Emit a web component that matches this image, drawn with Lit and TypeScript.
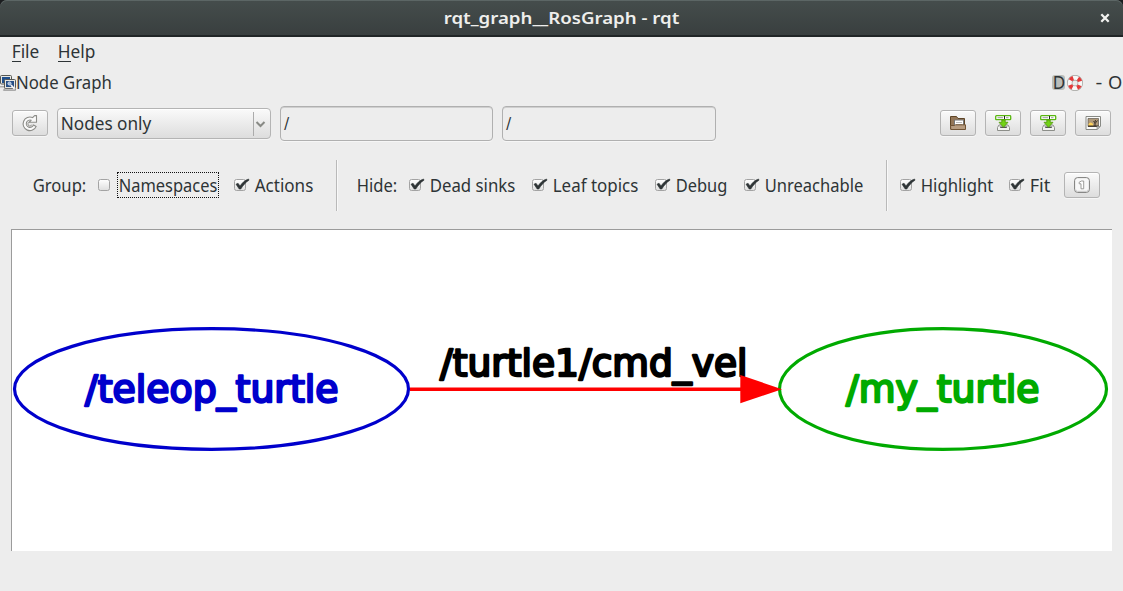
import { LitElement, html, css, svg, nothing } from "lit";
import { customElement, property } from "lit/decorators.js";

/** A line of interface text set to a fixed measure. */
@customElement("ui-label")
class UiLabel extends LitElement {
  @property() text = "";
  @property({ type: Number }) width = 50;
  @property({ type: Number }) inset = 0.3;
  @property({ type: Boolean }) mnemonic = false;
  @property({ type: Number }) underline = 9;
  @property({ type: Boolean, reflect: true }) strong = false;

  static styles = css`
    :host { display: block; flex: none; height: 20px; color: #2e3436; }
    svg { display: block; overflow: visible; }
    text { font-family: "Noto Sans", "Open Sans", sans-serif; font-size: 17.4px; fill: currentColor; white-space: pre; }
    :host([strong]) { color: #eeeeec; }
    :host([strong]) text { font-weight: 600; font-size: 16.8px; }
  `;

  render() {
    return html`<svg width=${this.width} height="20">
      <text x=${-this.inset} y="16" textLength=${this.width + this.inset + 0.3} lengthAdjust="spacingAndGlyphs">${this.text}</text>
      ${this.mnemonic ? svg`<rect x="0" y="19" width=${this.underline} height="1" fill="#2e3436"/>` : nothing}
    </svg>`;
  }
}

@customElement("check-item")
class CheckItem extends LitElement {
  @property() label = "";
  @property({ type: Number }) width = 50;
  @property({ type: Boolean }) checked = false;
  @property({ type: Boolean }) focused = false;

  static styles = css`
    :host { display: flex; align-items: center; flex: none; gap: 4px; }
    .box { display: block; overflow: visible; }
    .focus { outline: 1px dotted #111; outline-offset: 1px; height: 22px; padding-top: 2px; margin-bottom: 2px; box-sizing: border-box; }
  `;

  render() {
    return html`
      <svg class="box" width="17" height="16">
        <defs><linearGradient id="g" x2="0" y2="1"><stop stop-color="#fff"/><stop offset="1" stop-color="#dedede"/></linearGradient></defs>
        <rect x=".5" y="1.5" width="11" height="11" rx="2" fill="url(#g)" stroke="#a3a3a3"/>
        ${this.checked ? svg`<path d="M2 6.2 4 5.2 6 8 C8.5 4.5 11 2 14.6 1 L15 2.2 C11.5 4.4 9 7.5 6.8 11 H5.2Z" fill="#2e3436" stroke="#2e3436" stroke-width=".6"/>` : nothing}
      </svg>
      <div class=${this.focused ? "focus" : ""}><ui-label .text=${this.label} .width=${this.width}></ui-label></div>`;
  }
}

const icons = {
  refresh: svg`<path d="M10.6 2.6A6.8 6.8 0 1 0 14.2 11.4L11.5 9.9A3.7 3.7 0 1 1 9.2 5.2L7.4 7.2H14.5V.6H12.6Z" fill="#fafafa" stroke="#8c8c88" stroke-width="1.1" stroke-linejoin="round"/><path d="M9.8 9.6A2 2 0 1 1 8 7" fill="none" stroke="#8c8c88" stroke-width=".9"/>`,
  folder: svg`<path d="M.5 14V1.5H6.5L8 3.5H14.5V14Z" fill="#947657" stroke="#5e4526"/><path d="M4.5 5H13.5V11H4.5Z" fill="#fff" stroke="#777"/><path d="M6 7.5H12M6 9.5H12" stroke="#bbb"/><path d="M.5 10.5H4.5L5.5 9.8H15.5V14.5H.8Z" fill="#b79c80" stroke="#705334"/>`,
  save: svg`<path d="M2.5 12.5 4 10H13L14.5 12.5V15.5H2.5Z" fill="#f2f2f0" stroke="#8c8e89"/><path d="M4.5 11.5H12.5L11.5 13H5.5Z" fill="#555753"/><rect x=".7" y=".7" width="15" height="4" rx=".8" fill="#fff" stroke="#59b611" stroke-width="1.3"/><path d="M2.5 2.7H8M11 2.7H13.5" stroke="#999"/><path d="M9.5 1V4" stroke="#222"/><path d="M6.8 5H10.2V7.3H13L8.5 12.3 4 7.3H6.8Z" fill="#73d216" stroke="#4e9a06" stroke-width=".8"/>`,
  image: svg`<path d="M1 1.5H15.5V11L12 14.5H1Z" fill="#fbfbfa" stroke="#888a85"/><path d="M3 3.5H13.5V11.5H3Z" fill="#b09a7a" stroke="#5b574f" stroke-width=".7"/><path d="M3.5 9Q5.5 6 8 9V11H3.5Z" fill="#ffd35c"/><path d="M3 10.5H13.5V11.8H3Z" fill="#3b332a"/><path d="M10 11V8L8.5 6M10 8.5 12.5 5.5M10 7 10.5 5" stroke="#221c16" stroke-width=".8" fill="none"/><path d="M12 14.5V11.5H15.3Z" fill="#c8c8c4" stroke="#888a85" stroke-width=".7"/>`,
  one: svg`<rect x=".6" y=".6" width="14.8" height="14.8" rx="3" fill="#f8f8f8" stroke="#7c7c7a"/><path d="M1.8 12.5Q1.8 14.3 3.5 14.3H12.5Q14.2 14.3 14.2 12.5" fill="none" stroke="#c9c9c9"/><path d="M5.2 5.2 7.5 4H9.7V11.8H7V6.8H5.2Z" fill="#fff" stroke="#92928f" stroke-width=".9"/>`,
};

@customElement("tool-button")
class ToolButton extends LitElement {
  @property() icon: keyof typeof icons = "folder";
  static styles = css`
    :host { display: block; flex: none; }
    .btn { box-sizing: border-box; width: 36px; height: 26px; border: 1px solid #b4b4b4; border-radius: 3px;
      background: linear-gradient(#fafafa, #dddddd); box-shadow: 0 1px #f6f6f6, inset 0 1px #fff;
      display: grid; place-items: center; margin-bottom: 1px; }
    svg { display: block; overflow: visible; }
  `;
  render() {
    return html`<div class="btn"><svg width="16" height="16">${icons[this.icon]}</svg></div>`;
  }
}

@customElement("app-root")
class AppRoot extends LitElement {
  static styles = css`
    :host { display: flex; flex-direction: column; width: 1123px; height: 591px; overflow: hidden; background: #ededed; }
    * { box-sizing: border-box; }
    svg { display: block; flex: none; overflow: visible; }
    .corners { background: #1b1d1f; height: 37px; flex: none; }
    .titlebar { height: 37px; display: flex; padding: 8px 13px 0 444px; justify-content: space-between; border-radius: 7px 7px 0 0;
      background: linear-gradient(#454d4c, #393f3f); border-bottom: 2px solid #202526; box-shadow: inset 0 1px #5c6665; }
    .close { margin-top: 5px; }
    .menu { height: 30px; display: flex; gap: 19px; padding: 5px 12px 0; flex: none; }
    .dock { height: 39px; display: flex; padding-top: 6px; flex: none; }
    .dock .app { margin-top: 2px; }
    .spacer { flex: 1; }
    .edge { width: 1px; }
    .d { background: #babdb9; border-radius: 3px; width: 13px; height: 15px; margin-top: 2px; display: flex; padding-left: 2px; }
    .d ui-label { margin-top: -2px; }
    .buoy { margin: 2px 13px 0 2px; }
    .o { margin-left: 7px; }
    .tools { display: flex; align-items: center; gap: 9px; height: 35px; padding: 0 12px; flex: none; }
    .combo { width: 214px; height: 31px; border: 1px solid #b4b4b4; border-radius: 4px; display: flex; padding: 5px 0 0 3px;
      background: linear-gradient(#fafafa, #dddddd); box-shadow: 0 1px #f6f6f6, inset 0 1px #fff; }
    .arrow { margin: -2px 5px 0 0; }
    .input { width: 214px; height: 35px; border: 1px solid #b0b0b0; border-radius: 4px; padding: 7px 3px;
      box-shadow: inset 0 1px #cfcfcf, 0 1px #f6f6f6; }
    .input.first { width: 213px; }
    .opts { display: flex; align-items: center; height: 52px; margin-top: 19px; padding-left: 33px; flex: none; }
    .opts tool-button { margin: 0 0 1px 14px; }
    .set { display: flex; gap: 17px; margin-left: 12px; }
    .set.view { gap: 16px; }
    .sep { width: 2px; height: 51px; border-left: 1px solid #b9b9b9; border-right: 1px solid #f8f8f8; margin-left: 23px; margin-bottom: 1px; }
    .hide { margin-left: 19px; }
    .canvas { margin: 17px 11px 0; height: 322px; flex: none; border-left: 1px solid #9b9b9b; border-top: 1px solid #9b9b9b; background: #fff; overflow: hidden; }
    .canvas text { font-family: "DejaVu Sans", sans-serif; font-size: 38px; stroke-width: 2.4; stroke-linejoin: round; }
  `;

  private check(label: string, width: number, checked = true, focused = false) {
    return html`<check-item .label=${label} .width=${width} ?checked=${checked} ?focused=${focused}></check-item>`;
  }

  render() {
    return html`
      <div class="corners"><header class="titlebar">
        <ui-label strong text="rqt_graph__RosGraph - rqt" width="235"></ui-label>
        <svg class="close" width="10" height="10"><path d="M1.3 1.3 8.7 8.7M8.7 1.3 1.3 8.7" stroke="#f2f2f0" stroke-width="2.3"/></svg>
      </header></div>
      <nav class="menu">
        <ui-label mnemonic text="File" width="27" underline="9"></ui-label>
        <ui-label mnemonic text="Help" width="37" underline="13"></ui-label>
      </nav>
      <div class="dock">
        <svg class="app" width="16" height="16">
          <rect x=".5" y=".5" width="11" height="8.5" rx="1" fill="#e8e8e3" stroke="#555753"/><path d="M2 2H10V8H2Z" fill="#1f4f8d"/>
          <path d="M0 11H5V12.5H0Z" fill="#aaa"/>
          <rect x="4.5" y="4.5" width="11" height="9" rx="1" fill="#e8e8e3" stroke="#555753"/><path d="M6 6H14V12H6Z" fill="#274f86"/>
          <path d="M3.5 15.3H15.5V13.8H4.5Z" fill="#ddd" stroke="#666" stroke-width=".6"/>
          <circle cx="9.5" cy="8.5" r="1.6" fill="#9db9dc" stroke="#dfe6ee" stroke-width=".8"/><path d="M11 10 14.5 14" stroke="#f5f5f5" stroke-width="1.8"/>
        </svg>
        <ui-label text="Node Graph" width="95.5" inset="0"></ui-label>
        <div class="spacer"></div>
        <div class="d"><ui-label text="D" width="11" inset="1.2"></ui-label></div>
        <svg class="buoy" width="16" height="16">
          <circle cx="8" cy="8" r="5.3" fill="none" stroke="#a0a09c" stroke-width="5.4"/>
          <circle cx="8" cy="8" r="5.3" fill="none" stroke="#f9f8f7" stroke-width="4"/>
          <circle cx="8" cy="8" r="5.3" fill="none" stroke="#e33a3a" stroke-width="4.2" stroke-dasharray="3.4 4.925" stroke-dashoffset="-2.46"/>
        </svg>
        <ui-label text="-" width="6" inset="0.5"></ui-label>
        <ui-label class="o" text="O" width="13" inset="1"></ui-label>
        <div class="edge"></div>
      </div>
      <div class="tools">
        <tool-button icon="refresh"></tool-button>
        <div class="combo"><ui-label text="Nodes only" width="90"></ui-label><div class="spacer"></div>
          <svg class="arrow" width="13" height="24"><path d="M1.5 0V24" stroke="#ababab"/><path d="M4.5 10 8.5 14 12.5 10" fill="none" stroke="#888a85" stroke-width="2"/></svg>
        </div>
        <div class="input first"><ui-label text="/" width="5" inset="0"></ui-label></div>
        <div class="input"><ui-label text="/" width="5" inset="0"></ui-label></div>
        <div class="spacer"></div>
        <tool-button icon="folder"></tool-button>
        <tool-button icon="save"></tool-button>
        <tool-button icon="save"></tool-button>
        <tool-button icon="image"></tool-button>
      </div>
      <div class="opts">
        <ui-label text="Group:" width="53"></ui-label>
        <div class="set">${this.check("Namespaces", 98, false, true)}${this.check("Actions", 58)}</div>
        <div class="sep"></div>
        <ui-label class="hide" text="Hide:" width="40"></ui-label>
        <div class="set">${this.check("Dead sinks", 85)}${this.check("Leaf topics", 85)}${this.check("Debug", 51)}${this.check("Unreachable", 98)}</div>
        <div class="sep"></div>
        <div class="set view">${this.check("Highlight", 72)}${this.check("Fit", 20)}</div>
        <tool-button icon="one"></tool-button>
      </div>
      <main class="canvas">
        <svg width="1100" height="321" viewBox="12 230 1100 321">
          <ellipse cx="211.5" cy="389" rx="197" ry="60.3" fill="none" stroke="#0000cc" stroke-width="3.2"/>
          <text x="85" y="401.6" textLength="253.5" lengthAdjust="spacingAndGlyphs" fill="#0000cc" stroke="#0000cc">/teleop_turtle</text>
          <ellipse cx="943" cy="389" rx="163.5" ry="60.3" fill="none" stroke="#00aa00" stroke-width="3.2"/>
          <text x="846" y="401.6" textLength="193.5" lengthAdjust="spacingAndGlyphs" fill="#00aa00" stroke="#00aa00">/my_turtle</text>
          <text x="440" y="375.6" textLength="307.5" lengthAdjust="spacingAndGlyphs" fill="#000" stroke="#000">/turtle1/cmd_vel</text>
          <path d="M410 389.2H742" stroke="#f00" stroke-width="3.4"/>
          <path d="M740.3 375 782 389.2 740.3 403.2Z" fill="#f00"/>
        </svg>
      </main>`;
  }
}
